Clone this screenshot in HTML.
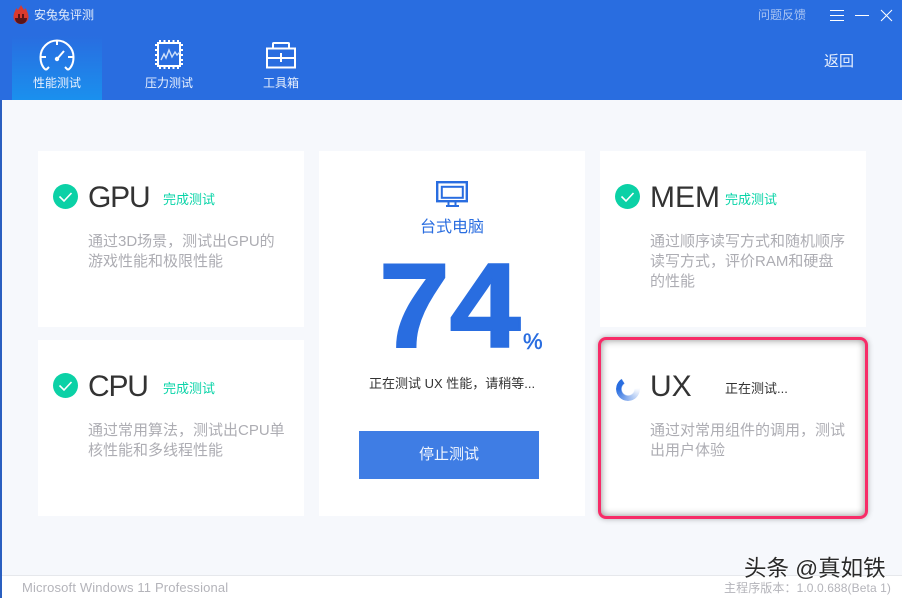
<!DOCTYPE html>
<html lang="zh-CN">
<head>
<meta charset="utf-8">
<title>安兔兔评测</title>
<style>
html,body{margin:0;padding:0}
body{width:902px;height:598px;overflow:hidden;position:relative;background:#f6f8fc;font-family:"Liberation Sans","Noto Sans CJK SC",sans-serif}
.a{position:absolute;white-space:nowrap}
.hdr{position:absolute;left:0;top:0;width:902px;height:100px;background:#296de0}
.edge{position:absolute;left:0;top:100px;width:2px;height:498px;background:#2a5fc0}
.tab{position:absolute;left:12px;top:36px;width:90px;height:64px;background:linear-gradient(#296de0,#1a90ee)}
.card{position:absolute;background:#fff}
.t{color:#e8f0fd;font-size:12px;line-height:14px}
.name{font-size:30px;line-height:36px;color:#333;letter-spacing:-1.2px}
.done{font-size:13px;line-height:16px;color:#0ad4a8}
.desc{font-size:15px;line-height:20px;color:#adadb3;width:210px;white-space:normal}
svg{position:absolute;overflow:visible}
</style>
</head>
<body>
<div class="hdr"></div>
<div class="tab"></div>
<div class="edge"></div>

<svg style="left:12px;top:5px" width="18" height="20" viewBox="0 0 18 20">
<path d="M9 0C10 2 11 3 12 5L14 3C14 5 16 7 16.500 11C17 16 13 19 9 19C5 19 1 16 1.500 11C2 7 4 5 4 3L6 5C7 3 8 2 9 0Z" fill="#d93a2e"/>
<path d="M3 13H15C15 17 12 19 9 19S3 17 3 13Z" fill="#5a1518"/>
<rect x="6" y="9" width="2" height="4" fill="#5a1518"/><rect x="10" y="9" width="2" height="4" fill="#5a1518"/>
</svg>
<div class="a t" style="left:34px;top:8px;color:#e3ecfb">安兔兔评测</div>

<svg style="left:39px;top:39px" width="36" height="32" viewBox="0 0 36 32" fill="none" stroke="#fff" stroke-width="2">
<path d="M7 31C3 28 1.500 23 1.500 18C1.500 9 9 1.500 18 1.500S34.500 9 34.500 18C34.500 23 33 28 29 31"/>
<path d="M18 2V6M2 18H7M29 18H34M7 31L10 28M29 31L26 28"/>
<path d="M18.500 19.500L25 12"/>
<circle cx="18" cy="20" r="2.200" fill="#fff" stroke="none"/>
</svg>
<div class="a t" style="left:33px;top:76px">性能测试</div>

<svg style="left:155px;top:40px" width="28" height="29" viewBox="0 0 28 29" fill="none" stroke="#fff">
<rect x="3" y="3" width="22" height="23" stroke-width="2"/>
<path d="M5 0V2M9.500 0V2M14 0V2M18.500 0V2M23 0V2M5 27V29M9.500 27V29M14 27V29M18.500 27V29M23 27V29M0 5H2M0 10H2M0 15H2M0 20H2M0 24H2M26 5H28M26 10H28M26 15H28M26 20H28M26 24H28" stroke-width="2"/>
<path d="M6 20L9 14L11 18L14 10L17 17L20 12L22 15L25 12" stroke-width="1.400" stroke="#cfe0fa"/>
</svg>
<div class="a t" style="left:145px;top:76px">压力测试</div>

<svg style="left:266px;top:42px" width="30" height="27" viewBox="0 0 30 27" fill="none" stroke="#fff" stroke-width="2">
<rect x="1" y="6.500" width="28" height="19"/>
<path d="M7 6V1.500C7 1.200 7.500 1 8 1H22C22.500 1 23 1.200 23 1.500V6M1 16H29M15 11V20"/>
</svg>
<div class="a t" style="left:263px;top:76px">工具箱</div>

<div class="a" style="left:758px;top:8px;font-size:12px;line-height:14px;color:#a9c4f2">问题反馈</div>
<svg style="left:830px;top:9px" width="64" height="13" viewBox="0 0 64 13" fill="none" stroke="#fff" stroke-width="1">
<path d="M0 1.500H14M0 6.500H14M0 11.500H14"/>
<path d="M25 6.500H39"/>
<path d="M51 1L62 12M62 1L51 12"/>
</svg>
<div class="a" style="left:824px;top:54px;font-size:15px;line-height:16px;color:#e8f0fd">返回</div>

<div class="card" style="left:38px;top:151px;width:266px;height:176px"></div>
<div class="card" style="left:38px;top:340px;width:266px;height:176px"></div>
<div class="card" style="left:319px;top:151px;width:266px;height:365px"></div>
<div class="card" style="left:600px;top:151px;width:266px;height:176px"></div>
<div class="card" style="left:600px;top:340px;width:266px;height:176px"></div>

<!-- GPU -->
<svg style="left:53px;top:184px" width="25" height="25" viewBox="0 0 25 25"><circle cx="12.500" cy="12.500" r="12.500" fill="#0bd1a6"/><path d="M6.500 12.500L11 17L18.500 9" fill="none" stroke="#fff" stroke-width="1.600"/></svg>
<div class="a name" style="left:88px;top:180px">GPU</div>
<div class="a done" style="left:163px;top:192px">完成测试</div>
<div class="a desc" style="left:88px;top:232px">通过3D场景，测试出GPU的<br>游戏性能和极限性能</div>

<!-- CPU -->
<svg style="left:53px;top:373px" width="25" height="25" viewBox="0 0 25 25"><circle cx="12.500" cy="12.500" r="12.500" fill="#0bd1a6"/><path d="M6.500 12.500L11 17L18.500 9" fill="none" stroke="#fff" stroke-width="1.600"/></svg>
<div class="a name" style="left:88px;top:369px">CPU</div>
<div class="a done" style="left:163px;top:381px">完成测试</div>
<div class="a desc" style="left:88px;top:421px">通过常用算法，测试出CPU单<br>核性能和多线程性能</div>

<!-- Center -->
<svg style="left:436px;top:181px" width="32" height="26" viewBox="0 0 32 26" fill="none" stroke="#296de0">
<rect x="1.200" y="1.200" width="29.600" height="19" stroke-width="2.400"/>
<rect x="5.800" y="5.800" width="21" height="11" stroke-width="2"/>
<path d="M12.500 21V25M19.500 21V25" stroke-width="2"/>
<path d="M10 25H23" stroke-width="2"/>
</svg>
<div class="a" style="left:420px;top:219px;font-size:16px;line-height:18px;color:#296de0">台式电脑</div>
<div class="a" style="left:379px;top:236px;font-size:120px;line-height:140px;font-weight:700;color:#296de0;-webkit-text-stroke:2px #296de0;transform:scaleX(1.06);transform-origin:0 0">74</div>
<div class="a" style="left:523px;top:330px;font-size:22px;line-height:24px;font-weight:400;color:#296de0;-webkit-text-stroke:.5px #296de0">%</div>
<div class="a" style="left:369px;top:376px;font-size:13px;line-height:16px;color:#333">正在测试 UX 性能，请稍等...</div>
<div class="a" style="left:359px;top:431px;width:180px;height:48px;background:#3f7de4;color:#f3f7fe;font-size:15px;line-height:48px;text-align:center">停止测试</div>

<!-- MEM -->
<svg style="left:615px;top:184px" width="25" height="25" viewBox="0 0 25 25"><circle cx="12.500" cy="12.500" r="12.500" fill="#0bd1a6"/><path d="M6.500 12.500L11 17L18.500 9" fill="none" stroke="#fff" stroke-width="1.600"/></svg>
<div class="a name" style="left:650px;top:180px;letter-spacing:0">MEM</div>
<div class="a done" style="left:725px;top:192px">完成测试</div>
<div class="a desc" style="left:650px;top:232px">通过顺序读写方式和随机顺序<br>读写方式，评价RAM和硬盘<br>的性能</div>

<!-- UX -->
<div class="a" style="left:598px;top:337px;width:264px;height:176px;border:3.500px solid #f72c68;border-radius:8px;box-shadow:inset 0 0 8px rgba(0,0,0,.45),0 0 6px rgba(0,0,0,.3)"></div>
<div class="a" style="left:616px;top:377px;width:24px;height:24px;border-radius:50%;background:conic-gradient(from 0deg,rgba(41,109,224,0) 85deg,rgba(41,109,224,.3) 140deg,#296de0 270deg,#296de0 325deg,rgba(41,109,224,0) 330deg);-webkit-mask:radial-gradient(circle,transparent 6px,#000 7px);mask:radial-gradient(circle,transparent 6px,#000 7px)"></div>
<div class="a name" style="left:650px;top:369px;letter-spacing:0">UX</div>
<div class="a" style="left:725px;top:381px;font-size:13px;line-height:16px;color:#333">正在测试...</div>
<div class="a desc" style="left:650px;top:421px">通过对常用组件的调用，测试<br>出用户体验</div>

<!-- Footer -->
<div class="a" style="left:2px;top:575px;width:900px;height:23px;background:#fff;border-top:1px solid #e6e8ec;box-sizing:border-box"></div>
<div class="a" style="left:22px;top:580px;font-size:13px;line-height:15px;color:#b4b4ba;letter-spacing:.15px">Microsoft Windows 11 Professional</div>
<div class="a" style="left:724px;top:581px;font-size:12px;line-height:14px;color:#b4b4ba;letter-spacing:.1px">主程序版本：1.0.0.688(Beta 1)</div>
<div class="a" style="left:744px;top:555px;font-size:22.500px;line-height:28px;color:#2a2a2a;text-shadow:0 0 2px #fff,0 0 2px #fff">头条 @真如铁</div>
</body>
</html>
